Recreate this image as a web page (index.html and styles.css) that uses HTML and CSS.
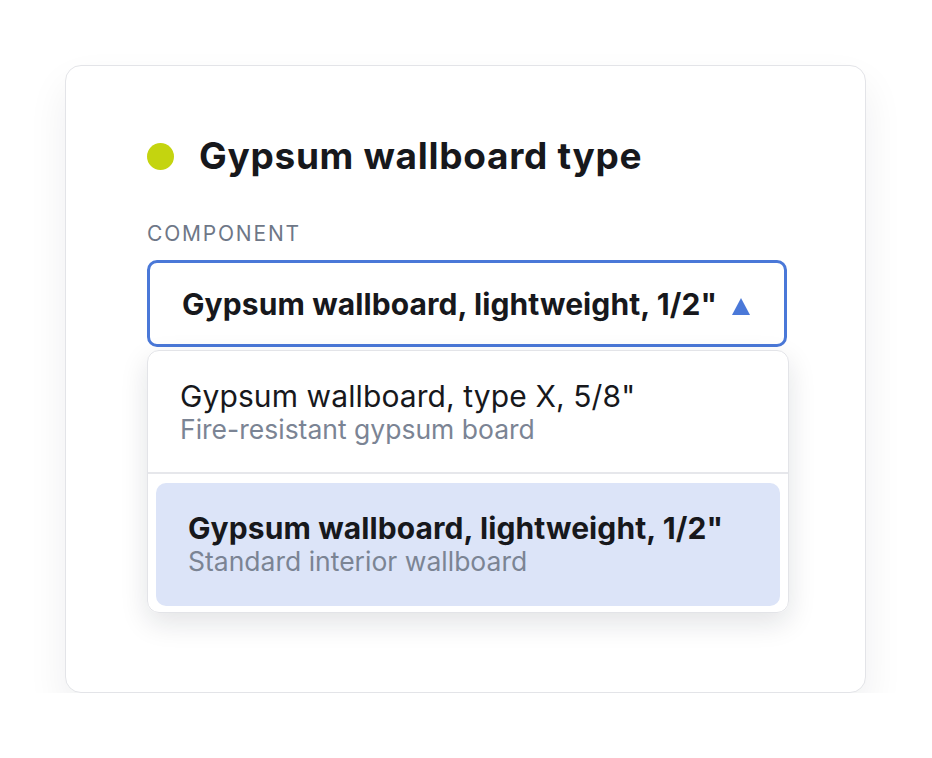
FILE: index.html
```html
<!DOCTYPE html>
<html lang="en">
	<head>
		<meta charset="UTF-8" />
		<meta name="viewport" content="width=device-width, initial-scale=1.0" />
		<title>Gypsum wallboard type</title>
		<link rel="stylesheet" href="styles.css">
	</head>
	<body>
		<div class="card">
			<div class="card-title">
				<span class="dot"></span>
				<h1>Gypsum wallboard type</h1>
			</div>
			<div class="field-label">Component</div>
			<div class="select">
				<span class="select-value">Gypsum wallboard, lightweight, 1/2"</span>
				<span class="caret"></span>
			</div>
			<ul class="options">
				<li class="option">
					<div class="option-name">Gypsum wallboard, type X, 5/8"</div>
					<div class="option-desc">Fire-resistant gypsum board</div>
				</li>
				<li class="option selected">
					<div class="option-name">Gypsum wallboard, lightweight, 1/2"</div>
					<div class="option-desc">Standard interior wallboard</div>
				</li>
			</ul>
		</div>
	</body>
</html>
```

FILE: styles.css
```css
body {
	margin: 0;
	background-color: #ffffff;
	font-family: Inter, "Open Sans", sans-serif;
	color: #17181c;
}

.card {
	margin: 65px 0 0 65px;
	width: 640px;
	padding: 68px 78px 79px 81px;
	background-color: #ffffff;
	border: 1px solid #e3e4e8;
	border-radius: 16px;
	box-shadow: 0 20px 40px rgba(20, 24, 40, 0.07);
}

.card-title {
	display: flex;
	align-items: center;
	gap: 25px;
}

.dot {
	flex: none;
	width: 27px;
	height: 27px;
	border-radius: 50%;
	background-color: #c4d40f;
}

.card-title h1 {
	margin: 0;
	font-size: 37px;
	line-height: 44px;
	font-weight: 700;
	letter-spacing: 0.7px;
}

.field-label {
	margin-top: 44px;
	font-size: 21px;
	line-height: 24px;
	letter-spacing: 1.8px;
	text-transform: uppercase;
	color: #6e7787;
}

.select {
	margin-top: 14px;
	height: 81px;
	display: flex;
	align-items: center;
	justify-content: space-between;
	padding: 0 34px 0 32px;
	border: 3px solid #4a78d8;
	border-radius: 10px;
}

.select-value {
	font-size: 30px;
	font-weight: 700;
	letter-spacing: 0.1px;
}

.caret {
	margin-top: 6px;
	width: 0;
	height: 0;
	border-left: 9px solid transparent;
	border-right: 9px solid transparent;
	border-bottom: 17px solid #4a78d8;
}

.options {
	list-style: none;
	margin: 3px -2px 0 0;
	padding: 0 8px 6px 8px;
	border: 1px solid #e3e4e8;
	border-radius: 12px;
	box-shadow: 0 10px 28px rgba(20, 24, 40, 0.12);
}

.option {
	padding: 27px 24px 30px 32px;
}

.option + .option {
	margin-top: 9px;
}

.option:first-child {
	margin: 0 -8px;
	padding: 27px 32px 28px 32px;
	border-bottom: 2px solid #e6e7eb;
}

.option-name {
	font-size: 30px;
	line-height: 36px;
	letter-spacing: 0.1px;
}

.option-desc {
	font-size: 26.5px;
	line-height: 30px;
	color: #7b8494;
}

.option.selected {
	background-color: #dce4f8;
	border-radius: 10px;
}

.option.selected .option-name {
	font-weight: 700;
}
```
